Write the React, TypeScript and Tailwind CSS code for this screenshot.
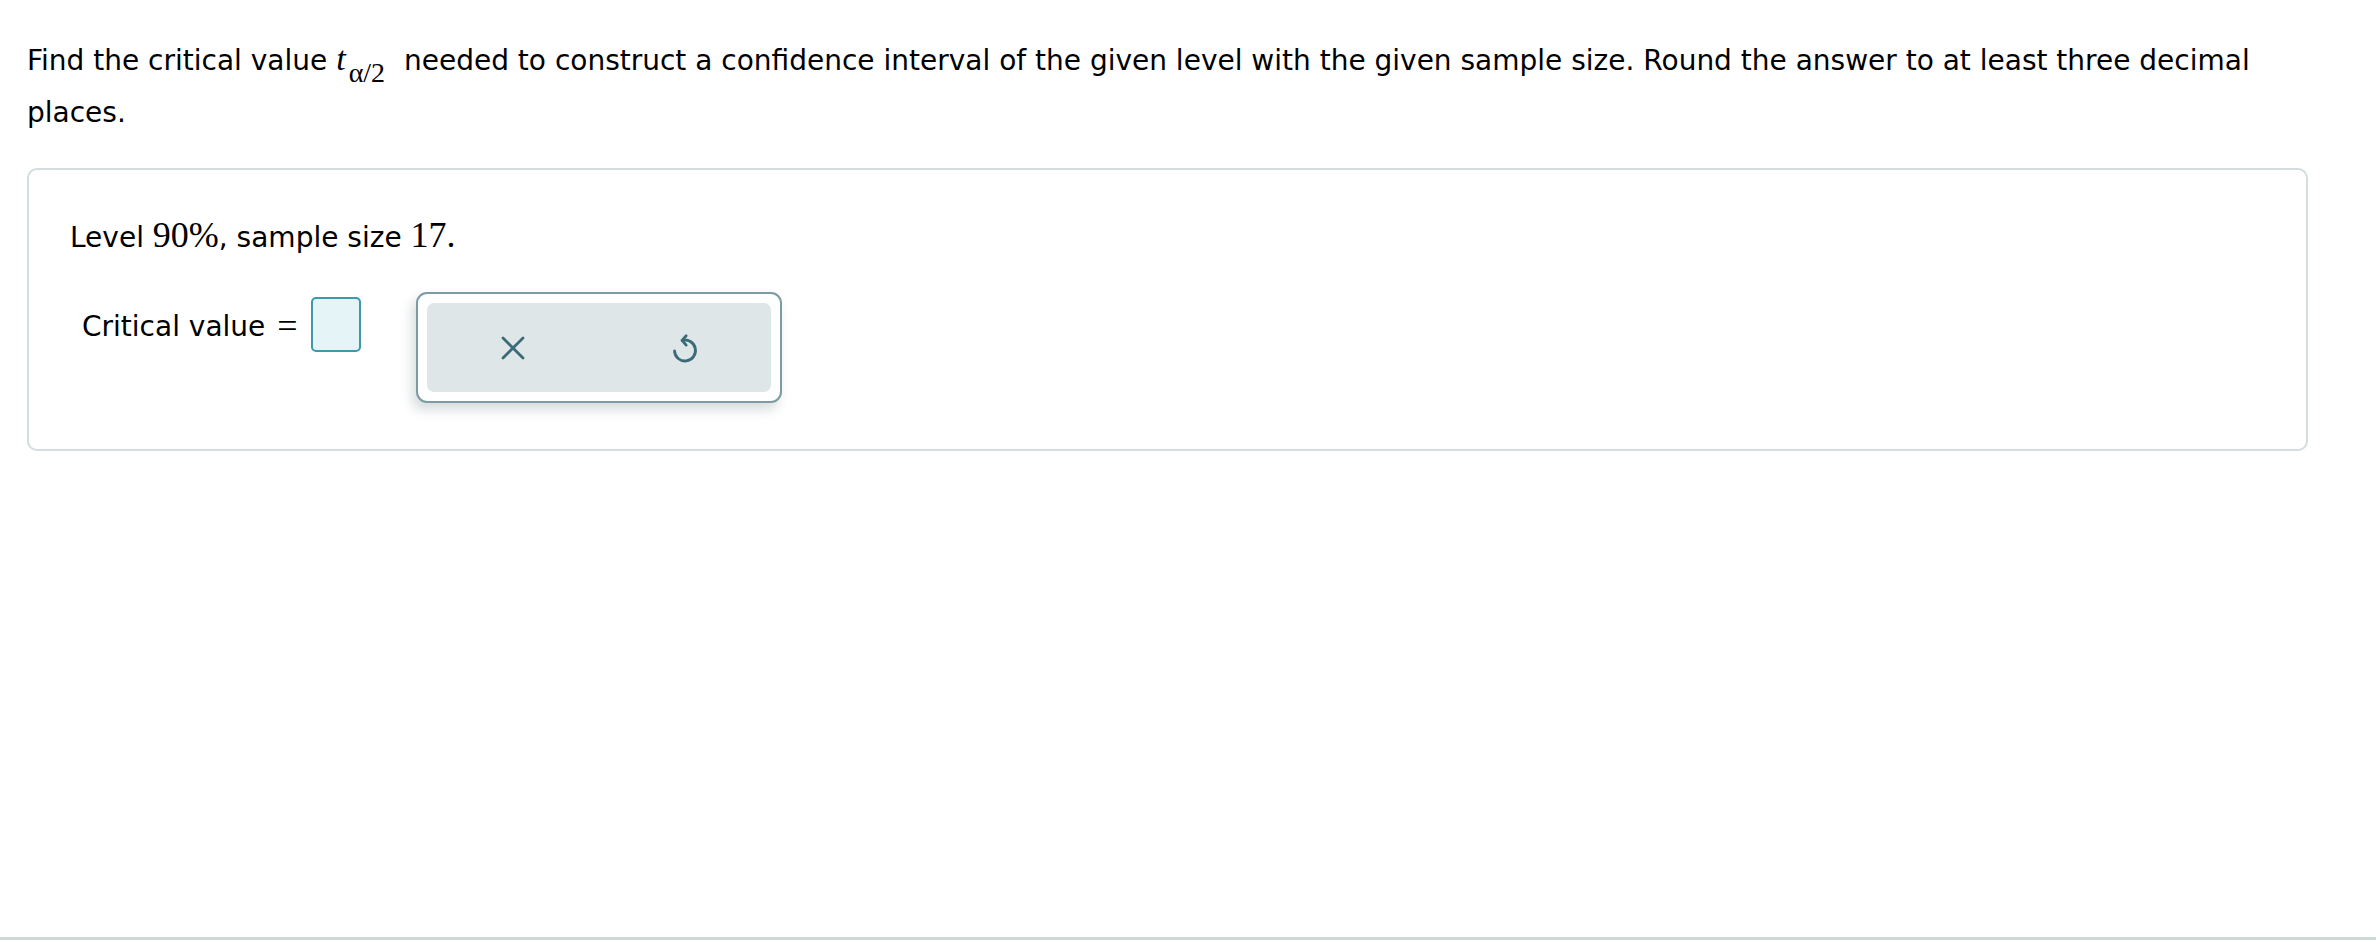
import React from "react";

const sans = "font-['Verdana','DejaVu_Sans',sans-serif]";
const serif = "font-['Liberation_Serif','Times_New_Roman',serif]";

const ClearIcon = () => (
  <svg width="24" height="24" viewBox="0 0 24 24" fill="none" stroke="#3c6b78" strokeWidth="2.8" strokeLinecap="round">
    <path d="M2 2L22 22" />
    <path d="M22 2L2 22" />
  </svg>
);

const UndoIcon = () => (
  <svg width="28" height="34" viewBox="0 0 24 29" fill="none" stroke="#3c6b78" strokeWidth="2.4" strokeLinecap="round" strokeLinejoin="round">
    <path d="M9.5 8A9 9 0 1 1 3 17" />
    <path d="M13 4L9.5 8L13 12" />
  </svg>
);

const App = () => {
  return (
    <div className={`box-border h-[940px] border-b-[3px] border-[#cbd9d9] bg-white text-black ${sans}`}>
      {/* Question prompt */}
      <p className="w-[2300px] pl-[27px] pt-[33px] text-[28px] leading-[52px]">
        Find the critical value{" "}
        <span className={`${serif} italic text-[34px]`}>t</span>
        <span className={`${serif} text-[28px] relative top-[12px] ml-[3px] mr-[10px] leading-none`}>
          α/2
        </span>{" "}
        needed to construct a confidence interval of the given level with the
        given sample size. Round the answer to at least three decimal places.
      </p>

      {/* Answer card */}
      <div className="mx-[27px] mt-[29px] w-[2281px] rounded-[10px] border-2 border-[#d3dcdf] pl-[41px] pt-[45px] pb-[46px]">
        <p className="text-[28px] leading-[40px]">
          Level <span className={`${serif} text-[36px]`}>90%</span>, sample
          size <span className={`${serif} text-[36px]`}>17.</span>
        </p>

        <div className="mt-[34px] flex items-start">
          <div className="ml-[12px] mt-[5px] flex items-start">
            <span className="mt-[2px] text-[28px] leading-[55px]">Critical value</span>
            <span className={`${serif} mt-[2px] ml-[12px] text-[36px] leading-[55px]`}>=</span>
            <div className="ml-[13px] h-[55px] w-[50px] rounded-[5px] border-2 border-[#3c9aac] bg-[#e5f4f7]" />
          </div>

          <div className="ml-[55px] box-border h-[111px] w-[366px] rounded-[11px] border-2 border-[#7d9ba3] bg-white p-[9px] shadow-[-4px_7px_12px_rgba(40,60,70,0.18)]">
            <div className="flex h-full items-center rounded-[7px] bg-[#dfe6e8]">
              <button type="button" className="flex flex-1 items-center justify-center">
                <ClearIcon />
              </button>
              <button type="button" className="flex flex-1 items-center justify-center">
                <UndoIcon />
              </button>
            </div>
          </div>
        </div>
      </div>
    </div>
  );
};

export default App;
